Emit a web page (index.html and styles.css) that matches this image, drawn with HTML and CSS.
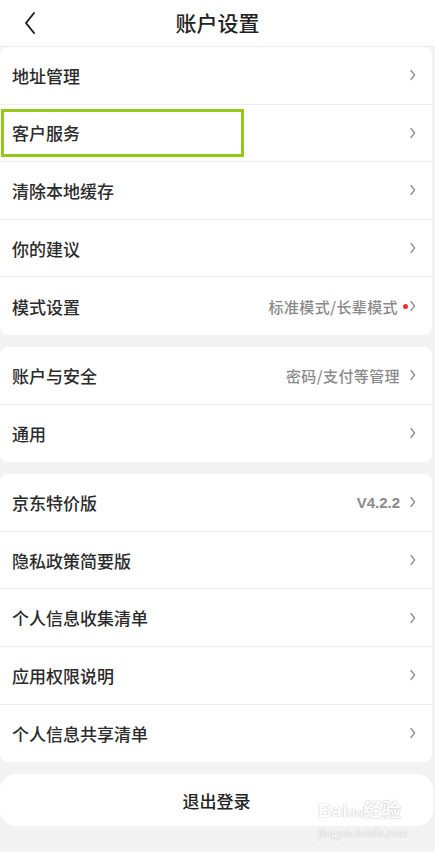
FILE: index.html
```html
<!DOCTYPE html>
<html lang="zh-CN">
<head>
  <meta charset="UTF-8" />
  <meta name="viewport" content="width=device-width, initial-scale=1.0"/>
  <title>账户设置</title>
  <link rel="stylesheet" href="styles.css">
</head>
<body>
  <header class="topbar">
    <span class="back">
      <svg width="14" height="24" viewBox="0 0 14 24"><path d="M11 2 L3 12 L11 22" fill="none" stroke="#222" stroke-width="2" stroke-linecap="round" stroke-linejoin="round"/></svg>
    </span>
    <h1>账户设置</h1>
  </header>

  <div class="group">
    <div class="row"><span class="label">地址管理</span><svg class="arrow" width="6" height="12" viewBox="0 0 6 12"><path d="M1 1.5 Q3 4 4.6 6 Q3 8 1 10.5" fill="none" stroke="#8c8c8c" stroke-width="1.3" stroke-linecap="round"/></svg></div>
    <div class="row"><span class="label">客户服务</span><svg class="arrow" width="6" height="12" viewBox="0 0 6 12"><path d="M1 1.5 Q3 4 4.6 6 Q3 8 1 10.5" fill="none" stroke="#8c8c8c" stroke-width="1.3" stroke-linecap="round"/></svg><span class="mark"></span></div>
    <div class="row"><span class="label">清除本地缓存</span><svg class="arrow" width="6" height="12" viewBox="0 0 6 12"><path d="M1 1.5 Q3 4 4.6 6 Q3 8 1 10.5" fill="none" stroke="#8c8c8c" stroke-width="1.3" stroke-linecap="round"/></svg></div>
    <div class="row"><span class="label">你的建议</span><svg class="arrow" width="6" height="12" viewBox="0 0 6 12"><path d="M1 1.5 Q3 4 4.6 6 Q3 8 1 10.5" fill="none" stroke="#8c8c8c" stroke-width="1.3" stroke-linecap="round"/></svg></div>
    <div class="row"><span class="label">模式设置</span><span class="value spaced">标准模式/长辈模式</span><span class="dot"></span><svg class="arrow" width="6" height="12" viewBox="0 0 6 12"><path d="M1 1.5 Q3 4 4.6 6 Q3 8 1 10.5" fill="none" stroke="#8c8c8c" stroke-width="1.3" stroke-linecap="round"/></svg></div>
  </div>

  <div class="group">
    <div class="row"><span class="label">账户与安全</span><span class="value spaced">密码/支付等管理</span><svg class="arrow" width="6" height="12" viewBox="0 0 6 12"><path d="M1 1.5 Q3 4 4.6 6 Q3 8 1 10.5" fill="none" stroke="#8c8c8c" stroke-width="1.3" stroke-linecap="round"/></svg></div>
    <div class="row"><span class="label">通用</span><svg class="arrow" width="6" height="12" viewBox="0 0 6 12"><path d="M1 1.5 Q3 4 4.6 6 Q3 8 1 10.5" fill="none" stroke="#8c8c8c" stroke-width="1.3" stroke-linecap="round"/></svg></div>
  </div>

  <div class="group">
    <div class="row"><span class="label">京东特价版</span><span class="value num">V4.2.2</span><svg class="arrow" width="6" height="12" viewBox="0 0 6 12"><path d="M1 1.5 Q3 4 4.6 6 Q3 8 1 10.5" fill="none" stroke="#8c8c8c" stroke-width="1.3" stroke-linecap="round"/></svg></div>
    <div class="row"><span class="label">隐私政策简要版</span><svg class="arrow" width="6" height="12" viewBox="0 0 6 12"><path d="M1 1.5 Q3 4 4.6 6 Q3 8 1 10.5" fill="none" stroke="#8c8c8c" stroke-width="1.3" stroke-linecap="round"/></svg></div>
    <div class="row"><span class="label">个人信息收集清单</span><svg class="arrow" width="6" height="12" viewBox="0 0 6 12"><path d="M1 1.5 Q3 4 4.6 6 Q3 8 1 10.5" fill="none" stroke="#8c8c8c" stroke-width="1.3" stroke-linecap="round"/></svg></div>
    <div class="row"><span class="label">应用权限说明</span><svg class="arrow" width="6" height="12" viewBox="0 0 6 12"><path d="M1 1.5 Q3 4 4.6 6 Q3 8 1 10.5" fill="none" stroke="#8c8c8c" stroke-width="1.3" stroke-linecap="round"/></svg></div>
    <div class="row"><span class="label">个人信息共享清单</span><svg class="arrow" width="6" height="12" viewBox="0 0 6 12"><path d="M1 1.5 Q3 4 4.6 6 Q3 8 1 10.5" fill="none" stroke="#8c8c8c" stroke-width="1.3" stroke-linecap="round"/></svg></div>
  </div>

  <div class="logout">退出登录</div>

  <div class="watermark">
    <div class="wm-top">Bai<span class="wm-du">du</span>经验</div>
    <div class="wm-url">jingyan.baidu.com</div>
  </div>
</body>
</html>
```

FILE: styles.css
```css
* {
  box-sizing: border-box;
  margin: 0;
  padding: 0;
}

body {
  background: #f3f3f4;
  font-family: "Noto Sans CJK SC", "Noto Sans", sans-serif;
  color: #2a2a2a;
  width: 435px;
  height: 852px;
  overflow: hidden;
  position: relative;
}

.topbar {
  height: 47px;
  background: #fff;
  border-bottom: 1px solid #ececec;
  display: flex;
  align-items: center;
  justify-content: center;
  position: relative;
}

.topbar h1 {
  font-size: 21px;
  font-weight: 500;
  color: #222;
  margin-top: -2px;
}

.back {
  position: absolute;
  left: 23px;
  top: 11px;
}

.group {
  background: #fff;
  border-radius: 8px;
  margin: 0 3px 12px 0;
}

.row {
  height: 57.6px;
  display: flex;
  align-items: center;
  padding: 0 16px 0 12px;
  border-bottom: 1px solid #eeeeee;
  position: relative;
}

.row:last-child {
  border-bottom: none;
}

.label {
  flex: 1;
  font-size: 17px;
  font-weight: 500;
  color: #2b2b2b;
}

.value {
  font-size: 15px;
  color: #8a8a8a;
  margin-right: 10px;
  font-weight: 500;
}

.value.spaced {
  letter-spacing: 0.4px;
}

.value.num {
  font-family: "Liberation Sans", sans-serif;
  font-weight: 700;
  font-size: 15px;
}

.dot {
  width: 5px;
  height: 5px;
  border-radius: 50%;
  background: #e8332a;
  margin-left: -5px;
  margin-right: 2px;
}

.arrow {
  display: block;
}

.mark {
  position: absolute;
  left: 1px;
  top: 4px;
  width: 243px;
  height: 48px;
  border: 3px solid #96c81a;
}

.logout {
  background: #fff;
  border-radius: 16px;
  height: 52px;
  margin: 0 2px 0 0;
  display: flex;
  align-items: center;
  justify-content: center;
  font-size: 17px;
  font-weight: 500;
  color: #222;
}

.watermark {
  position: absolute;
  left: 318px;
  top: 800px;
  color: #fff;
  opacity: 0.9;
  text-shadow: 0 0 1px #bbb, 0 0 1px #bbb;
}

.wm-top {
  font-family: "Liberation Sans", sans-serif;
  font-size: 19px;
  font-weight: 700;
  line-height: 22px;
}

.wm-du {
  font-size: 13px;
}

.wm-url {
  font-family: "Liberation Serif", serif;
  font-size: 12px;
  line-height: 14px;
  margin-top: 2px;
}
```
